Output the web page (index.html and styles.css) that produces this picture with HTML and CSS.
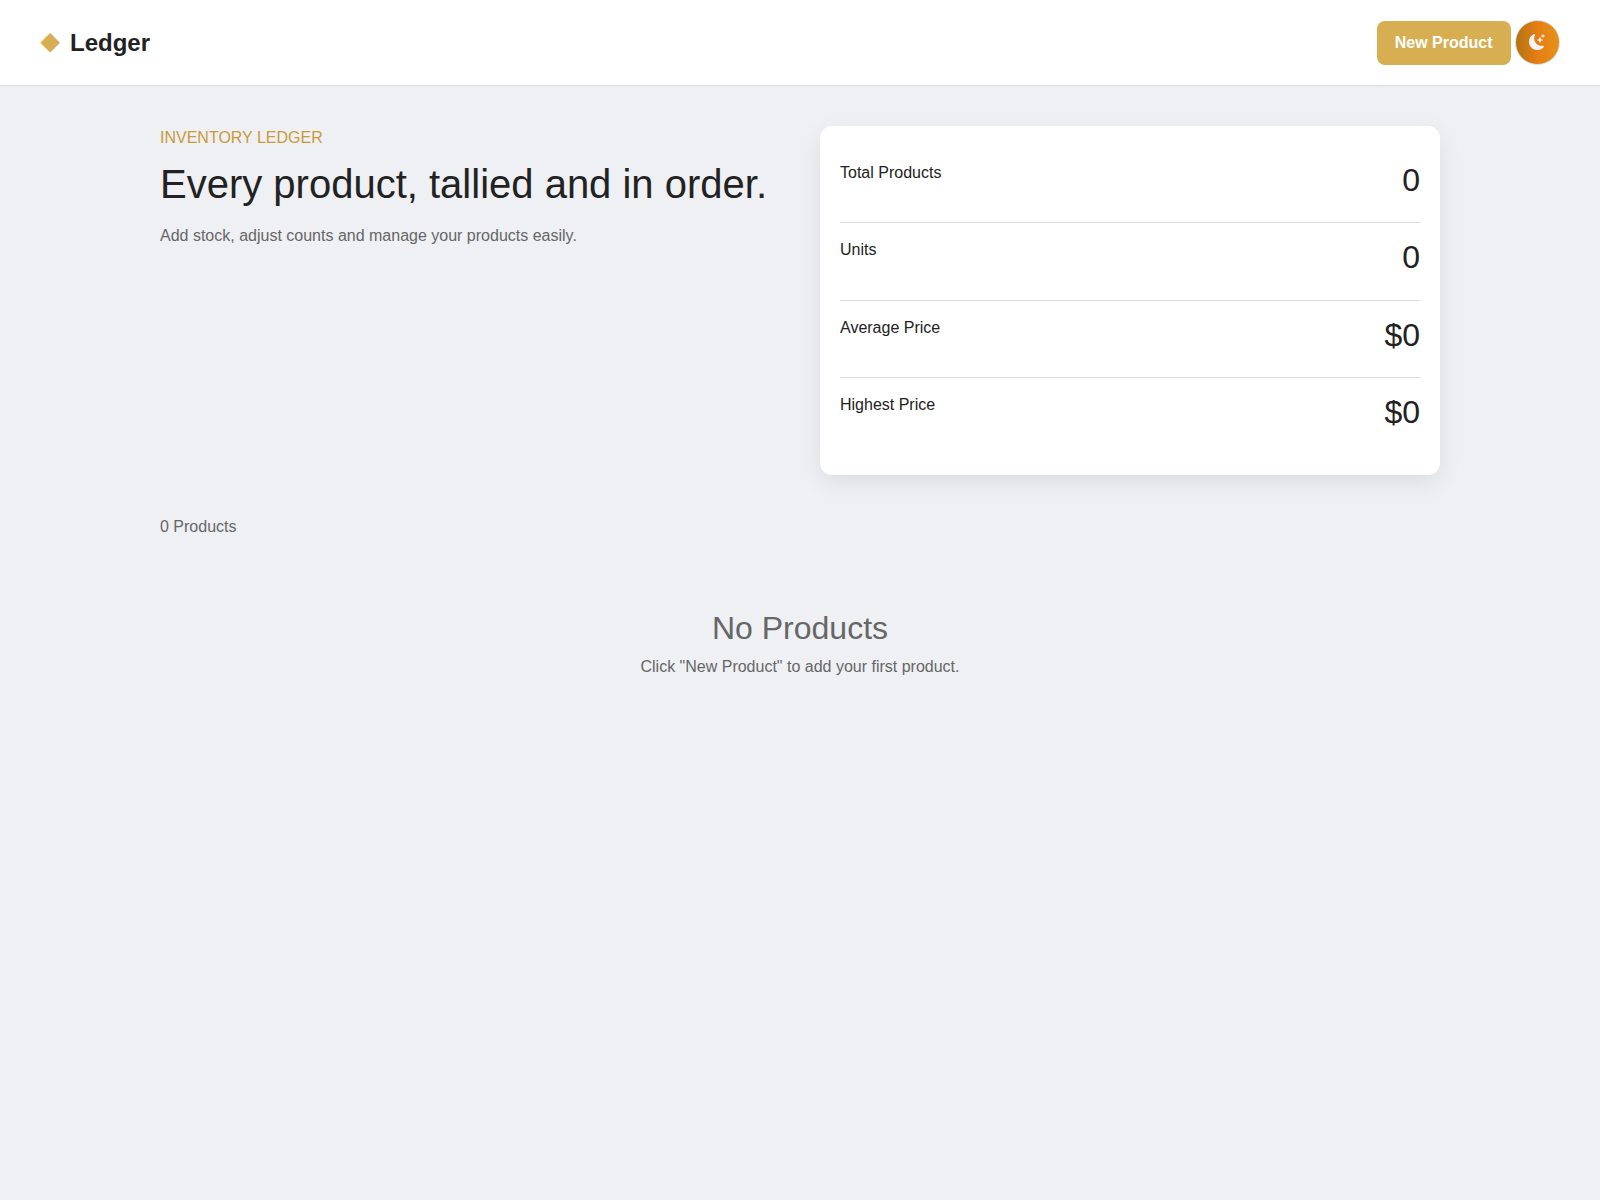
FILE: index.html
```
<!DOCTYPE html>
<html lang="en">
<head>
<meta charset="utf-8">
<title>Ledger</title>
<link rel="stylesheet" href="styles.css">
</head>
<body>
<header class="topbar">
  <div class="brand"><span class="brand-mark">◆</span><span>Ledger</span></div>
  <div class="actions">
    <button class="btn-new" type="button">New Product</button>
    <button class="btn-theme" type="button" aria-label="Toggle theme">
      <svg width="16" height="16" viewBox="0 0 16 16" fill="currentColor"><path d="M6 .278a.77.77 0 0 1 .08.858 7.2 7.2 0 0 0-.878 3.46c0 4.021 3.278 7.277 7.318 7.277q.792-.001 1.533-.16a.79.79 0 0 1 .81.316.73.73 0 0 1-.031.893A8.35 8.35 0 0 1 8.344 16C3.734 16 0 12.286 0 7.71 0 4.266 2.114 1.312 5.124.06A.75.75 0 0 1 6 .278"/><path d="M10.794 3.148a.217.217 0 0 1 .412 0l.387 1.162c.173.518.579.924 1.097 1.097l1.162.387a.217.217 0 0 1 0 .412l-1.162.387a1.73 1.73 0 0 0-1.097 1.097l-.387 1.162a.217.217 0 0 1-.412 0l-.387-1.162A1.73 1.73 0 0 0 9.31 6.593l-1.162-.387a.217.217 0 0 1 0-.412l1.162-.387a1.73 1.73 0 0 0 1.097-1.097zM13.863.099a.145.145 0 0 1 .274 0l.258.774c.115.346.386.617.732.732l.774.258a.145.145 0 0 1 0 .274l-.774.258a1.16 1.16 0 0 0-.732.732l-.258.774a.145.145 0 0 1-.274 0l-.258-.774a1.16 1.16 0 0 0-.732-.732l-.774-.258a.145.145 0 0 1 0-.274l.774-.258c.346-.115.617-.386.732-.732z"/></svg>
    </button>
  </div>
</header>
<main class="page">
  <section class="hero">
    <div>
      <p class="eyebrow">INVENTORY LEDGER</p>
      <h1 class="title">Every product, tallied and in order.</h1>
      <p class="lead">Add stock, adjust counts and manage your products easily.</p>
    </div>
    <div class="stats">
      <div class="stat"><span>Total Products</span><h2 class="value">0</h2></div>
      <div class="stat"><span>Units</span><h2 class="value">0</h2></div>
      <div class="stat"><span>Average Price</span><h2 class="value">$0</h2></div>
      <div class="stat"><span>Highest Price</span><h2 class="value">$0</h2></div>
    </div>
  </section>
  <p class="count">0 Products</p>
  <section class="empty">
    <h2 class="empty-title">No Products</h2>
    <p class="empty-text">Click "New Product" to add your first product.</p>
  </section>
</main>
</body>
</html>
```
FILE: styles.css
```
* { box-sizing: border-box; }
body {
  margin: 0;
  min-height: 100vh;
  background: #eef0f4;
  color: #222;
  font: 16px/1.5 "Liberation Sans", Arial, sans-serif;
}
h1, h2, p { margin: 0; font-weight: 400; }
.topbar {
  display: flex;
  justify-content: space-between;
  align-items: center;
  height: 86px;
  padding: 0 40px;
  background: #fff;
  border-bottom: 1px solid #d9dce0;
}
.brand {
  display: flex;
  align-items: center;
  gap: 10px;
  font-size: 24px;
  font-weight: 700;
}
.brand-mark {
  width: 20px;
  padding-bottom: 3px;
  text-align: center;
  color: #d8ae52;
}
.actions { display: flex; align-items: flex-end; gap: 4.5px; }
.btn-new {
  height: 44px;
  padding: 0 18px;
  border: 0;
  border-radius: 8px;
  background: #d8ae52;
  color: #fff;
  font: 700 16px/24px "Liberation Sans", Arial, sans-serif;
}
.btn-theme {
  display: flex;
  align-items: center;
  justify-content: center;
  width: 45px;
  height: 45px;
  padding: 0 1px 1px 0;
  border: 1px solid #d9dce0;
  border-radius: 50%;
  background: linear-gradient(90deg, #b27312, #e67e14 50%, #e59217);
  color: #f4f4f6;
}
.page { width: 1280px; margin: 0 auto; padding-top: 40px; }
.hero { display: grid; grid-template-columns: 1fr 1fr; gap: 40px; }
.eyebrow { margin-bottom: 10px; color: #c99a3a; }
.title { margin-bottom: 16px; font-size: 40px; line-height: 1.2; }
.lead, .count, .empty { color: #666; }
.stats {
  padding: 20px;
  border-radius: 12px;
  background: #fff;
  box-shadow: 0 8px 24px rgba(0, 0, 0, .08);
}
.stat {
  display: flex;
  justify-content: space-between;
  padding: 15px 0;
  border-bottom: 1px solid #dadada;
}
.stat:last-child { border-bottom: 0; }
.value, .empty-title { margin-bottom: 8px; font-size: 32px; line-height: 1.2; }
.count { margin-top: 40px; }
.empty { padding: 70px 0; text-align: center; }
```
